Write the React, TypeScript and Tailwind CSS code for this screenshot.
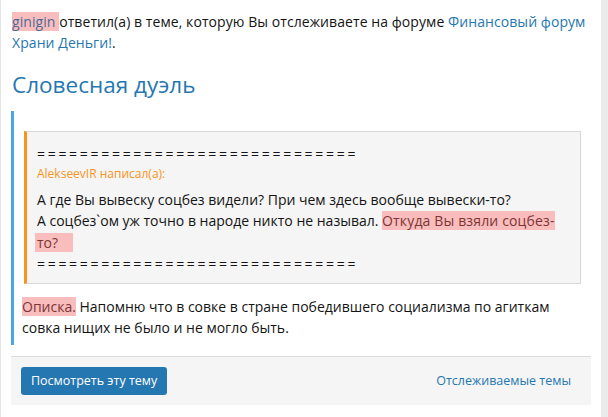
import React from "react";

const font = { fontFamily: '"Open Sans", "Noto Sans", sans-serif' };

export default function App() {
  const eq = "==============================";
  return (
    <div className="w-[608px] h-[417px] bg-[#ebebeb] overflow-hidden" style={font}>
      <div className="w-[601px] h-[417px] bg-white border-l border-[#e4e4e4] pl-[10px] pr-[10px] pt-[11px]">
        <p className="text-[14px] leading-[21px] text-[#141414] pl-px whitespace-nowrap tracking-[0.07px]">
          <a className="bg-[#f9bdbd] text-[#4c6a98]">ginigin </a>ответил(а) в теме, которую Вы отслеживаете на форуме{" "}
          <a className="text-[#2577b1]">Финансовый форум<br />Храни Деньги!</a>.
        </p>
        <h2 className="text-[22.5px] leading-[30px] text-[#2577b1] mt-[17px] pl-px">Словесная дуэль</h2>
        <div className="mt-[11px] border-l-[3px] border-[#47a7eb] pl-[8px] pr-[10px] pt-[20px] pb-[7px]">
          <div className="ml-[2px] bg-[#f5f5f5] border border-[#d8d8d8] border-l-[3px] border-l-[#f7941d] pl-[10px] pt-[11px] pb-[9px] text-[14px] leading-[21px] text-[#141414] whitespace-nowrap">
            <div className="tracking-[2.7px]">{eq}</div>
            <div className="text-[12px] leading-[20px] text-[#f7941d] mb-[5px]">AlekseevIR написал(а):</div>
            <div>А где Вы вывеску соцбез видели? При чем здесь вообще вывески-то?</div>
            <div className="leading-[22px]">
              А соцбез`ом уж точно в народе никто не называл.{" "}
              <span className="bg-[#f9bdbd] text-[#7d3535] tracking-[0.15px]">Откуда Вы взяли соцбез-</span>
            </div>
            <div className="-ml-[2px]">
              <span className="bg-[#f9bdbd] text-[#7d3535] pl-[2px]">то?&nbsp;&nbsp;&nbsp;&nbsp;</span>
            </div>
            <div className="tracking-[2.7px]">{eq}</div>
          </div>
          <p className="mt-[12px] text-[14px] leading-[21px] text-[#141414] whitespace-nowrap">
            <span className="bg-[#f9bdbd] text-[#7d3535]">Описка.</span> Напомню что в совке в стране победившего социализма по агиткам
            <br />
            совка нищих не было и не могло быть.
          </p>
        </div>
        <div className="mt-[11px] bg-[#f5f5f5] border-t border-[#dcdcdc] pl-[10px] pr-[20px] py-[10px] flex items-center justify-between">
          <button className="h-[28px] px-[10px] rounded-[3px] bg-[#2577b1] text-white text-[12.5px]">Посмотреть эту тему</button>
          <a className="text-[12.5px] text-[#2577b1]">Отслеживаемые темы</a>
        </div>
      </div>
    </div>
  );
}
